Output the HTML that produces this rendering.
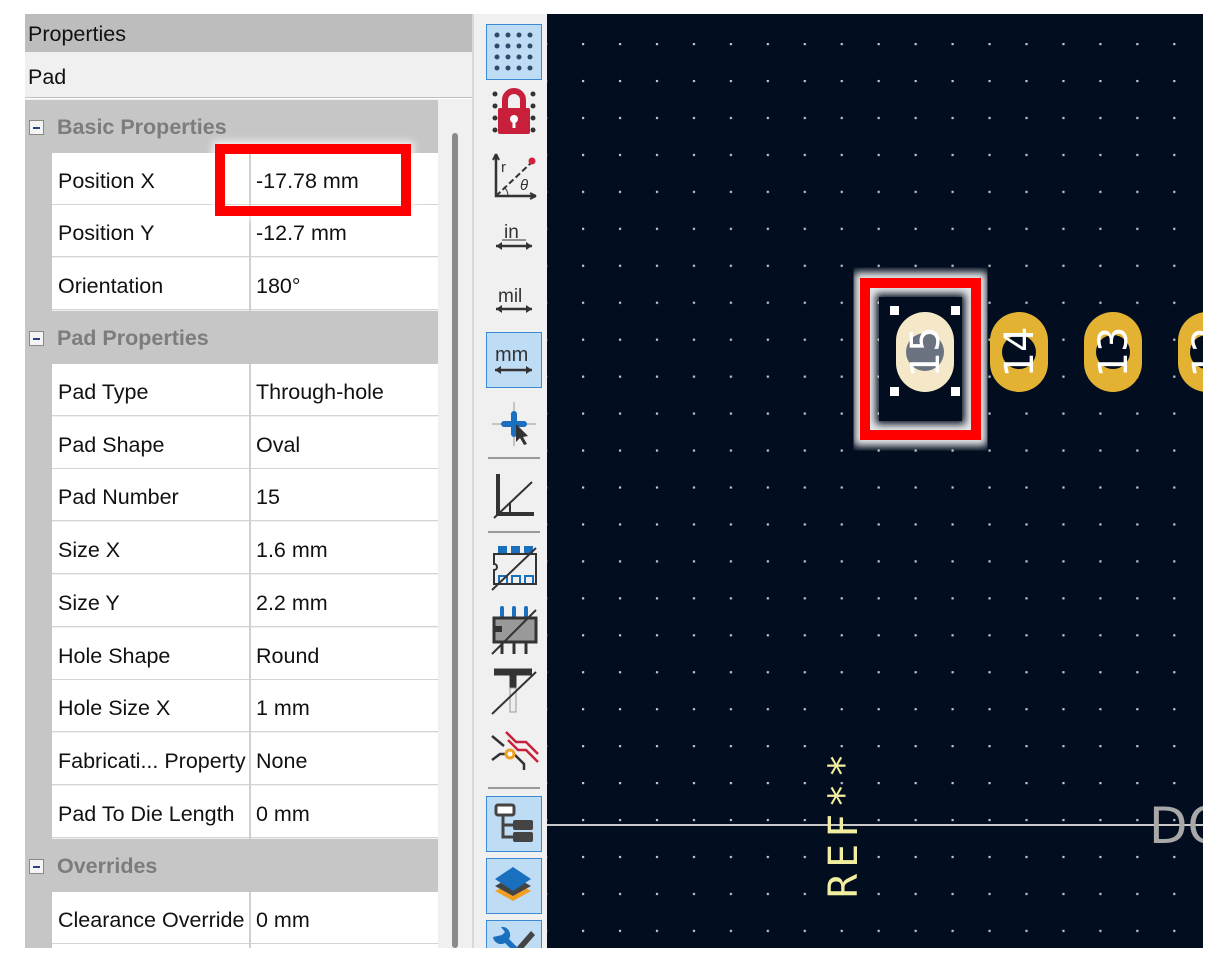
<!DOCTYPE html>
<html><head><meta charset="utf-8"><style>
*{margin:0;padding:0;box-sizing:border-box}
body{width:1225px;height:977px;background:#fff;position:relative;overflow:hidden;font-family:"Liberation Sans",sans-serif}
.a{position:absolute}
.t{font-size:21.5px;color:#111;white-space:nowrap}
.row{position:absolute;left:52px;width:386px;height:52px;background:#fff;border-bottom:1.5px solid #d4d4d4}
.row .k{position:absolute;left:6px;top:16px}
.row .v{position:absolute;left:204px;top:16px}
.row .d{position:absolute;left:197px;top:0;width:1.5px;height:53px;background:#d0d0d0}
.hdr{position:absolute;left:25px;width:413px;height:53px;background:#c6c6c6}
.hdr .m{position:absolute;left:4px;top:20px;width:15px;height:15px;border:1px solid #888;background:#f4f4f4}
.hdr .m:after{content:"";position:absolute;left:3px;top:6px;width:7px;height:2px;background:#2a3f8a}
.hdr .h{position:absolute;left:32px;top:15px;font-weight:bold;color:#7c7c7c;font-size:21.5px}
.btn{position:absolute;left:486px;width:56px;height:56px}
.sel{background:#bfdcf5;border:1.5px solid #3b8ad8}
</style></head><body>
<!-- left panel -->
<div class="a" style="left:25px;top:14px;width:448px;height:38px;background:#bdbdbd"></div>
<div class="a t" style="left:28px;top:22px">Properties</div>
<div class="a" style="left:25px;top:52px;width:448px;height:46px;background:#f0f0f0;border-bottom:1.5px solid #c0c0c0"></div>
<div class="a t" style="left:28px;top:65px">Pad</div>
<div class="a" style="left:25px;top:99px;width:448px;height:849px;background:#f0f0f0"></div>
<div class="a" style="left:25px;top:100px;width:27px;height:848px;background:#c6c6c6"></div>
<div class="a" style="left:452px;top:133px;width:6px;height:815px;background:#8a8a8a;border-radius:3px"></div>
<div class="a" style="left:472px;top:14px;width:2px;height:934px;background:#d8d8d8"></div>

<div class="hdr" style="top:100px"><div class="m"></div><div class="h">Basic Properties</div></div>
<div class="row" style="top:153px"><div class="k t">Position X</div><div class="d"></div><div class="v t">-17.78 mm</div></div>
<div class="row" style="top:205px"><div class="k t">Position Y</div><div class="d"></div><div class="v t">-12.7 mm</div></div>
<div class="row" style="top:258px"><div class="k t">Orientation</div><div class="d"></div><div class="v t">180°</div></div>
<div class="hdr" style="top:311px"><div class="m"></div><div class="h">Pad Properties</div></div>
<div class="row" style="top:364px"><div class="k t">Pad Type</div><div class="d"></div><div class="v t">Through-hole</div></div>
<div class="row" style="top:417px"><div class="k t">Pad Shape</div><div class="d"></div><div class="v t">Oval</div></div>
<div class="row" style="top:469px"><div class="k t">Pad Number</div><div class="d"></div><div class="v t">15</div></div>
<div class="row" style="top:522px"><div class="k t">Size X</div><div class="d"></div><div class="v t">1.6 mm</div></div>
<div class="row" style="top:575px"><div class="k t">Size Y</div><div class="d"></div><div class="v t">2.2 mm</div></div>
<div class="row" style="top:628px"><div class="k t">Hole Shape</div><div class="d"></div><div class="v t">Round</div></div>
<div class="row" style="top:680px"><div class="k t">Hole Size X</div><div class="d"></div><div class="v t">1 mm</div></div>
<div class="row" style="top:733px"><div class="k t">Fabricati... Property</div><div class="d"></div><div class="v t">None</div></div>
<div class="row" style="top:786px"><div class="k t">Pad To Die Length</div><div class="d"></div><div class="v t">0 mm</div></div>
<div class="hdr" style="top:839px"><div class="m"></div><div class="h">Overrides</div></div>
<div class="row" style="top:892px"><div class="k t">Clearance Override</div><div class="d"></div><div class="v t">0 mm</div></div>
<div class="row" style="top:944px;height:4px;border:0"><div class="d" style="height:4px"></div></div>

<!-- red box Position X -->
<div class="a" style="left:215px;top:144px;width:196px;height:72px;border:10px solid #f00;box-shadow:0 0 8px 2px rgba(255,255,255,.9)"></div>

<!-- toolbar -->
<div class="a" style="left:474px;top:14px;width:73px;height:934px;background:#f0f0f0"></div>
<div class="btn sel" style="top:24px"><svg width="53" height="53"><g fill="#2e4a6a"><circle cx="10" cy="10" r="2.5"/><circle cx="21" cy="10" r="2.5"/><circle cx="32" cy="10" r="2.5"/><circle cx="43" cy="10" r="2.5"/><circle cx="10" cy="21" r="2.5"/><circle cx="21" cy="21" r="2.5"/><circle cx="32" cy="21" r="2.5"/><circle cx="43" cy="21" r="2.5"/><circle cx="10" cy="32" r="2.5"/><circle cx="21" cy="32" r="2.5"/><circle cx="32" cy="32" r="2.5"/><circle cx="43" cy="32" r="2.5"/><circle cx="10" cy="43" r="2.5"/><circle cx="21" cy="43" r="2.5"/><circle cx="32" cy="43" r="2.5"/><circle cx="43" cy="43" r="2.5"/></g></svg></div>
<div class="btn" style="top:84px"><svg width="56" height="56"><g fill="#333"><circle cx="9" cy="10" r="2.5"/><circle cx="47" cy="10" r="2.5"/><circle cx="9" cy="22" r="2.5"/><circle cx="47" cy="22" r="2.5"/><circle cx="9" cy="34" r="2.5"/><circle cx="47" cy="34" r="2.5"/><circle cx="9" cy="46" r="2.5"/><circle cx="47" cy="46" r="2.5"/></g><path d="M19 24V16a9 9 0 0 1 18 0v8" stroke="#c8203a" stroke-width="6" fill="none"/><rect x="12" y="24" width="32" height="26" rx="2" fill="#c8203a"/><circle cx="28" cy="35" r="4" fill="#fff"/><rect x="26.5" y="36" width="3" height="8" fill="#fff"/></svg></div>
<div class="btn" style="top:148px"><svg width="56" height="56"><path d="M10 6V48H50" stroke="#333" stroke-width="2.5" fill="none"/><path d="M10 6l-3 6M10 6l3 6M50 48l-6-3M50 48l-6 3" stroke="#333" stroke-width="2"/><path d="M10 48L46 14" stroke="#333" stroke-width="2" stroke-dasharray="6 3"/><circle cx="46" cy="13" r="3.5" fill="#d0203a"/><text x="15" y="24" font-size="15" fill="#333">r</text><text x="34" y="42" font-size="15" font-style="italic" fill="#333">θ</text><path d="M22 48a12 12 0 0 0-4-9" stroke="#333" fill="none"/></svg></div>
<div class="btn" style="top:210px"><svg width="56" height="56"><text x="18" y="28" font-size="19" fill="#333" font-family="Liberation Sans">in</text><path d="M10 36H46" stroke="#333" stroke-width="2.5"/><path d="M10 36l6-4v8zM46 36l-6-4v8z" fill="#333"/><path d="M16 30H40" stroke="#333" stroke-width="1"/></svg></div>
<div class="btn" style="top:272px"><svg width="56" height="56"><text x="12" y="30" font-size="19" fill="#333" font-family="Liberation Sans">mil</text><path d="M10 37H46" stroke="#333" stroke-width="2.5"/><path d="M10 37l6-4v8zM46 37l-6-4v8z" fill="#333"/></svg></div>
<div class="btn sel" style="top:332px"><svg width="53" height="53"><text x="8" y="28" font-size="20" fill="#333" font-family="Liberation Sans">mm</text><path d="M8 37H45" stroke="#333" stroke-width="2.5"/><path d="M8 37l6-4v8zM45 37l-6-4v8z" fill="#333"/></svg></div>
<div class="btn" style="top:396px"><svg width="56" height="56"><path d="M28 6V50M6 28H50" stroke="#999" stroke-width="1"/><path d="M28 18v20M18 28h20" stroke="#1a6fbf" stroke-width="6" stroke-linecap="round"/><path d="M30 28l12 12-5 1 4 7-3 1-4-7-4 4z" fill="#333"/></svg></div>
<div class="a" style="left:488px;top:457px;width:52px;height:1.5px;background:#999"></div>
<div class="btn" style="top:468px"><svg width="56" height="56"><path d="M12 6V46H48" stroke="#333" stroke-width="4" fill="none"/><path d="M8 50L46 14" stroke="#333" stroke-width="2"/><path d="M24 34V46" stroke="#333" stroke-width="2"/></svg></div>
<div class="a" style="left:488px;top:531px;width:52px;height:1.5px;background:#999"></div>
<div class="btn" style="top:540px"><svg width="56" height="56"><rect x="12" y="6" width="9" height="9" fill="#1a6fbf"/><rect x="25" y="6" width="9" height="9" fill="#1a6fbf"/><rect x="38" y="6" width="9" height="9" fill="#1a6fbf"/><rect x="13" y="36" width="8" height="8" stroke="#1a6fbf" stroke-width="2" fill="none"/><rect x="26" y="36" width="8" height="8" stroke="#1a6fbf" stroke-width="2" fill="none"/><rect x="39" y="36" width="8" height="8" stroke="#1a6fbf" stroke-width="2" fill="none"/><path d="M8 14V24a3 3 0 0 1 0 6V44H50V14z" stroke="#333" stroke-width="2" fill="none"/><path d="M6 50L50 8" stroke="#333" stroke-width="2"/></svg></div>
<div class="btn" style="top:602px"><svg width="56" height="56"><path d="M16 6v10M28 6v10M40 6v10" stroke="#1a6fbf" stroke-width="4" stroke-linecap="round"/><rect x="8" y="16" width="42" height="24" fill="#999" stroke="#333" stroke-width="3"/><rect x="8" y="24" width="8" height="6" fill="#333"/><path d="M16 40v12M28 40v12M40 40v12" stroke="#333" stroke-width="3"/><path d="M6 52L50 8" stroke="#333" stroke-width="2"/></svg></div>
<div class="btn" style="top:662px"><svg width="56" height="56"><path d="M8 10H46M27 10V26" stroke="#333" stroke-width="7"/><rect x="24" y="26" width="6" height="24" fill="#eee" stroke="#999"/><path d="M6 52L50 10" stroke="#333" stroke-width="2"/></svg></div>
<div class="btn" style="top:724px"><svg width="56" height="56"><path d="M20 8l10 10h10l12 12" stroke="#c8203a" stroke-width="2.5" fill="none"/><path d="M22 16l10 10h8l12 12" stroke="#c8203a" stroke-width="2.5" fill="none"/><path d="M6 12l12 10M6 36l8-6h14l10 10v6" stroke="#333" stroke-width="2.5" fill="none"/><circle cx="24" cy="30" r="4" stroke="#f0a020" stroke-width="3" fill="#fff"/></svg></div>
<div class="a" style="left:488px;top:787px;width:52px;height:1.5px;background:#999"></div>
<div class="btn sel" style="top:796px"><svg width="53" height="53"><rect x="9" y="8" width="18" height="10" rx="2" fill="#fff" stroke="#444" stroke-width="3"/><path d="M16 18v22h10M16 28h10" stroke="#444" stroke-width="3" fill="none"/><rect x="26" y="23" width="20" height="10" rx="2" fill="#444"/><rect x="26" y="35" width="20" height="10" rx="2" fill="#444"/></svg></div>
<div class="btn sel" style="top:858px"><svg width="53" height="53"><path d="M26 22l18 10-18 10-18-10z" fill="#f0a020"/><path d="M26 17l18 10-18 10-18-10z" fill="#444"/><path d="M26 8l18 12-18 12-18-12z" fill="#1a6fbf"/></svg></div>
<div class="btn sel" style="top:920px;height:28px;overflow:hidden;border-bottom:0"><svg width="53" height="28"><path d="M6 16a8 8 0 0 0 12 6l10 10 4-4-10-10a8 8 0 0 0-8-12l4 5-3 3z" fill="#1a6fbf"/><path d="M30 26l14-16 4 4-14 16z" fill="#444"/></svg></div>

<!-- canvas -->
<svg class="a" style="left:547px;top:14px" width="656" height="934">
<defs><pattern id="g" x="35" y="29" width="36.95" height="36.95" patternUnits="userSpaceOnUse"><rect x="0" y="0" width="2.2" height="2.2" fill="#c0c8d0"/></pattern>
<filter id="bl"><feGaussianBlur stdDeviation="4"/></filter></defs>
<rect width="656" height="934" fill="#020d1f"/>
<rect width="656" height="934" fill="url(#g)"/>
<line x1="0" y1="811" x2="656" y2="811" stroke="#c8c8c8" stroke-width="2"/>
<text x="602" y="829" font-size="50" fill="#a8a8a8" font-family="DejaVu Sans">DO</text>
<text transform="translate(310,884) rotate(-90)" font-size="40" letter-spacing="6" fill="#f2eea0" font-family="DejaVu Sans Mono">REF**</text>
<!-- selection -->
<rect x="318" y="269" width="111" height="152" fill="none" stroke="rgba(255,255,255,.9)" stroke-width="22" filter="url(#bl)"/>
<rect x="332" y="283" width="83" height="124" fill="#020d1f"/>
<rect x="318" y="269" width="111" height="152" fill="none" stroke="#f00" stroke-width="10"/>
<rect x="349" y="298" width="58" height="80" rx="29" fill="#f5e8c8"/>
<circle cx="378" cy="338" r="19" fill="#6a7280"/>
<text transform="translate(392,338) rotate(-90)" text-anchor="middle" font-size="40" fill="#fff" font-family="DejaVu Sans">15</text>
<rect x="343" y="292" width="9" height="9" fill="#fff"/><rect x="404" y="292" width="9" height="9" fill="#fff"/>
<rect x="343" y="373" width="9" height="9" fill="#fff"/><rect x="404" y="373" width="9" height="9" fill="#fff"/>
<rect x="443" y="298" width="58" height="80" rx="29" fill="#e3b233"/>
<circle cx="472" cy="338" r="17" fill="#020d1f"/>
<text transform="translate(486,338) rotate(-90)" text-anchor="middle" font-size="40" fill="#fff" font-family="DejaVu Sans">14</text>
<rect x="537" y="298" width="58" height="80" rx="29" fill="#e3b233"/>
<circle cx="566" cy="338" r="17" fill="#020d1f"/>
<text transform="translate(580,338) rotate(-90)" text-anchor="middle" font-size="40" fill="#fff" font-family="DejaVu Sans">13</text>
<rect x="631" y="298" width="58" height="80" rx="29" fill="#e3b233"/>
<circle cx="660" cy="338" r="17" fill="#020d1f"/>
<text transform="translate(674,338) rotate(-90)" text-anchor="middle" font-size="40" fill="#fff" font-family="DejaVu Sans">12</text>
</svg>
</body></html>
